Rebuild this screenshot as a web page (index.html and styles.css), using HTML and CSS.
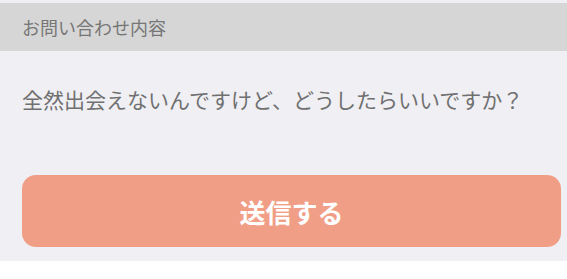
FILE: index.html
```html
<!DOCTYPE html>
<html lang="ja">
<head>
<meta charset="utf-8">
<link rel="stylesheet" href="styles.css">
</head>
<body>
<div class="page">
  <div class="section-header">お問い合わせ内容</div>
  <div class="message">全然出会えないんですけど、どうしたらいいですか？</div>
  <div class="actions">
    <button class="submit">送信する</button>
  </div>
</div>
</body>
</html>
```
FILE: styles.css
```css
html, body {
  margin: 0;
  padding: 0;
  background: #ffffff;
}
body {
  font-family: "Noto Sans CJK JP", "Noto Sans", sans-serif;
}
.page {
  background: #efeff4;
  padding-top: 3px;
  height: 258px;
  box-sizing: content-box;
}
.section-header {
  height: 48px;
  background: #d6d6d6;
  display: flex;
  align-items: center;
  padding-left: 22px;
  font-size: 18px;
  color: #767676;
}
.message {
  padding: 33px 0 0 22px;
  font-size: 21px;
  line-height: 30px;
  color: #707070;
  white-space: nowrap;
}
.actions {
  padding: 61px 6px 0 22px;
}
.submit {
  display: flex;
  align-items: center;
  justify-content: center;
  width: 100%;
  height: 72px;
  border: none;
  border-radius: 14px;
  background: #f09e86;
  color: #ffffff;
  font-family: "Noto Sans CJK JP", "Noto Sans", sans-serif;
  font-size: 26px;
  font-weight: bold;
  padding: 0;
}
```
